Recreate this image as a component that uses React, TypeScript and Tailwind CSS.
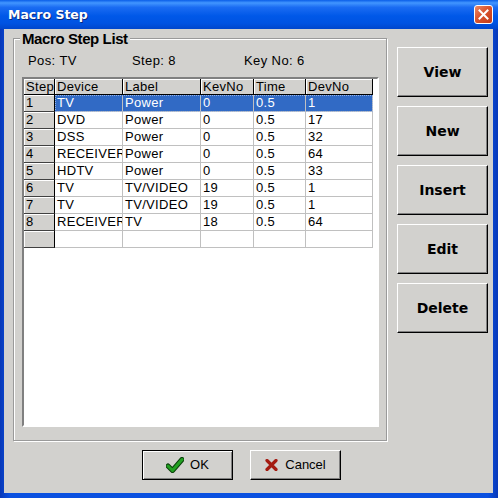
import React from 'react';

const rows = [
  ['1', 'TV', 'Power', '0', '0.5', '1'],
  ['2', 'DVD', 'Power', '0', '0.5', '17'],
  ['3', 'DSS', 'Power', '0', '0.5', '32'],
  ['4', 'RECEIVER', 'Power', '0', '0.5', '64'],
  ['5', 'HDTV', 'Power', '0', '0.5', '33'],
  ['6', 'TV', 'TV/VIDEO', '19', '0.5', '1'],
  ['7', 'TV', 'TV/VIDEO', '19', '0.5', '1'],
  ['8', 'RECEIVER', 'TV', '18', '0.5', '64'],
  ['', '', '', '', '', ''],
];

const headers = ['Step', 'Device', 'Label', 'KevNo', 'Time', 'DevNo'];
const widths = ['w-[31px]', 'w-[68px]', 'w-[78px]', 'w-[53px]', 'w-[52px]', 'w-[67px]'];

const SideButton: React.FC<{ label: string }> = ({ label }) => (
  <button className="w-[91px] h-[50px] bg-[#d2d1ce] border border-t-white border-l-white border-r-black border-b-black shadow-[inset_-1px_-1px_0_#808080] font-['DejaVu_Sans',sans-serif] font-bold text-[14px] text-black">
    {label}
  </button>
);

function CheckIcon() {
  return (
    <svg width="18" height="16" viewBox="0 0 18 16">
      <path d="M2 9 L6.5 13.5 L16 2.5" fill="none" stroke="#0a400a" strokeWidth="5" strokeLinecap="round" strokeLinejoin="round" />
      <path d="M2 9 L6.5 13.5 L16 2.5" fill="none" stroke="#22a022" strokeWidth="3" strokeLinecap="round" strokeLinejoin="round" />
    </svg>
  );
}

function CrossIcon() {
  return (
    <svg width="13" height="12" viewBox="0 0 13 12">
      <path d="M2 1.5 L11 10.5 M11 1.5 L2 10.5" fill="none" stroke="#a41a10" strokeWidth="3.2" strokeLinecap="round" />
    </svg>
  );
}

export default function App() {
  return (
    <div className="w-[498px] h-[498px] flex flex-col bg-[linear-gradient(to_right,#0838b8,#0a50e0_2%,#0a50e0_98%,#0838b8)] font-['Liberation_Sans',Arial,sans-serif] overflow-hidden select-none">
      {/* title bar */}
      <div className="h-[29px] flex items-center justify-between pl-[8px] pr-[5px] bg-[linear-gradient(to_bottom,#0a5ee8_0%,#4296ff_10%,#1b6cf2_25%,#0058e8_55%,#0053e2_80%,#0046cc_100%)]">
        <span className="pt-[2px] font-['DejaVu_Sans',sans-serif] font-bold text-[12.5px] text-white [text-shadow:1px_1px_0_#0a2a80]">
          Macro Step
        </span>
        <div className="w-[19px] h-[19px] mb-[1px] rounded-[3px] border border-white bg-[linear-gradient(to_bottom_right,#ec8a68,#d9542e_45%,#c23a18)] flex items-center justify-center">
          <svg width="11" height="11" viewBox="0 0 11 11">
            <path d="M1.5 1.5 L9.5 9.5 M9.5 1.5 L1.5 9.5" stroke="white" strokeWidth="2" strokeLinecap="square" />
          </svg>
        </div>
      </div>

      {/* body */}
      <div className="flex-1 ml-[4px] mr-[5px] mb-[5px] bg-[#d2d1ce] flex flex-col">
        <div className="flex pl-[9px] pt-[9px]">
          {/* group box */}
          <div className="relative w-[374px] h-[403px] border border-[#9a9a9a] shadow-[inset_1px_1px_0_#ffffff,1px_1px_0_#ffffff]">
            <div className="absolute -top-[9px] left-[6px] px-[2px] bg-[#d2d1ce] font-bold text-[15px] tracking-[-0.4px] leading-[17px] text-black">
              Macro Step List
            </div>
            <div className="flex pl-[14px] pt-[14px] text-[13px] tracking-[0.4px] leading-[16px] text-black">
              <span className="w-[104px]">Pos: TV</span>
              <span className="w-[112px]">Step: 8</span>
              <span>Key No: 6</span>
            </div>

            {/* grid */}
            <div className="ml-[8px] mt-[8px] w-[357px] h-[350px] border-2 border-t-[#808080] border-l-[#808080] border-b-white border-r-white bg-white overflow-hidden">
              <div className="flex h-[16px] text-[13px] tracking-[0.3px] leading-[15px] text-black">
                {headers.map((h, i) => (
                  <div
                    key={h}
                    className={`${widths[i]} shrink-0 bg-[#d2d1ce] border-r border-b border-black shadow-[inset_1px_1px_0_#ffffff] pl-[2px] overflow-hidden whitespace-nowrap`}
                  >
                    {h}
                  </div>
                ))}
              </div>
              {rows.map((r, ri) => {
                const selected = ri === 0;
                return (
                  <div key={ri} className="flex h-[17px] text-[13px] tracking-[0.3px] leading-[16px]">
                    <div className="w-[31px] shrink-0 bg-[#d2d1ce] border-r border-b border-r-black border-b-[#404040] shadow-[inset_1px_1px_0_#ffffff] pl-[2px] text-black overflow-hidden">
                      {r[0]}
                    </div>
                    <div className={`flex ${selected ? 'bg-[#316ac5] text-white outline outline-1 outline-dotted outline-[#9ab4e0] -outline-offset-1' : 'text-black'}`}>
                      {r.slice(1).map((c, ci) => (
                        <div
                          key={ci}
                          className={`${widths[ci + 1]} shrink-0 border-r border-b border-[#c0c0c0] pl-[2px] overflow-hidden whitespace-nowrap`}
                        >
                          {c}
                        </div>
                      ))}
                    </div>
                  </div>
                );
              })}
            </div>
          </div>

          {/* side buttons */}
          <div className="ml-[10px] mt-[9px] flex flex-col gap-[9px]">
            <SideButton label="View" />
            <SideButton label="New" />
            <SideButton label="Insert" />
            <SideButton label="Edit" />
            <SideButton label="Delete" />
          </div>
        </div>

        {/* bottom buttons */}
        <div className="flex mt-[9px] pl-[138px] gap-[17px]">
          <button className="w-[91px] h-[30px] border border-black bg-[#d2d1ce] shadow-[inset_1px_1px_0_#ffffff,inset_-1px_-1px_0_#808080] flex items-center justify-center gap-[6px] text-[13px] text-black">
            <CheckIcon />
            <span>OK</span>
          </button>
          <button className="w-[91px] h-[30px] bg-[#d2d1ce] border border-t-white border-l-white border-r-black border-b-black shadow-[inset_-1px_-1px_0_#808080] flex items-center justify-center gap-[7px] text-[13px] text-black">
            <CrossIcon />
            <span>Cancel</span>
          </button>
        </div>
      </div>
    </div>
  );
}
